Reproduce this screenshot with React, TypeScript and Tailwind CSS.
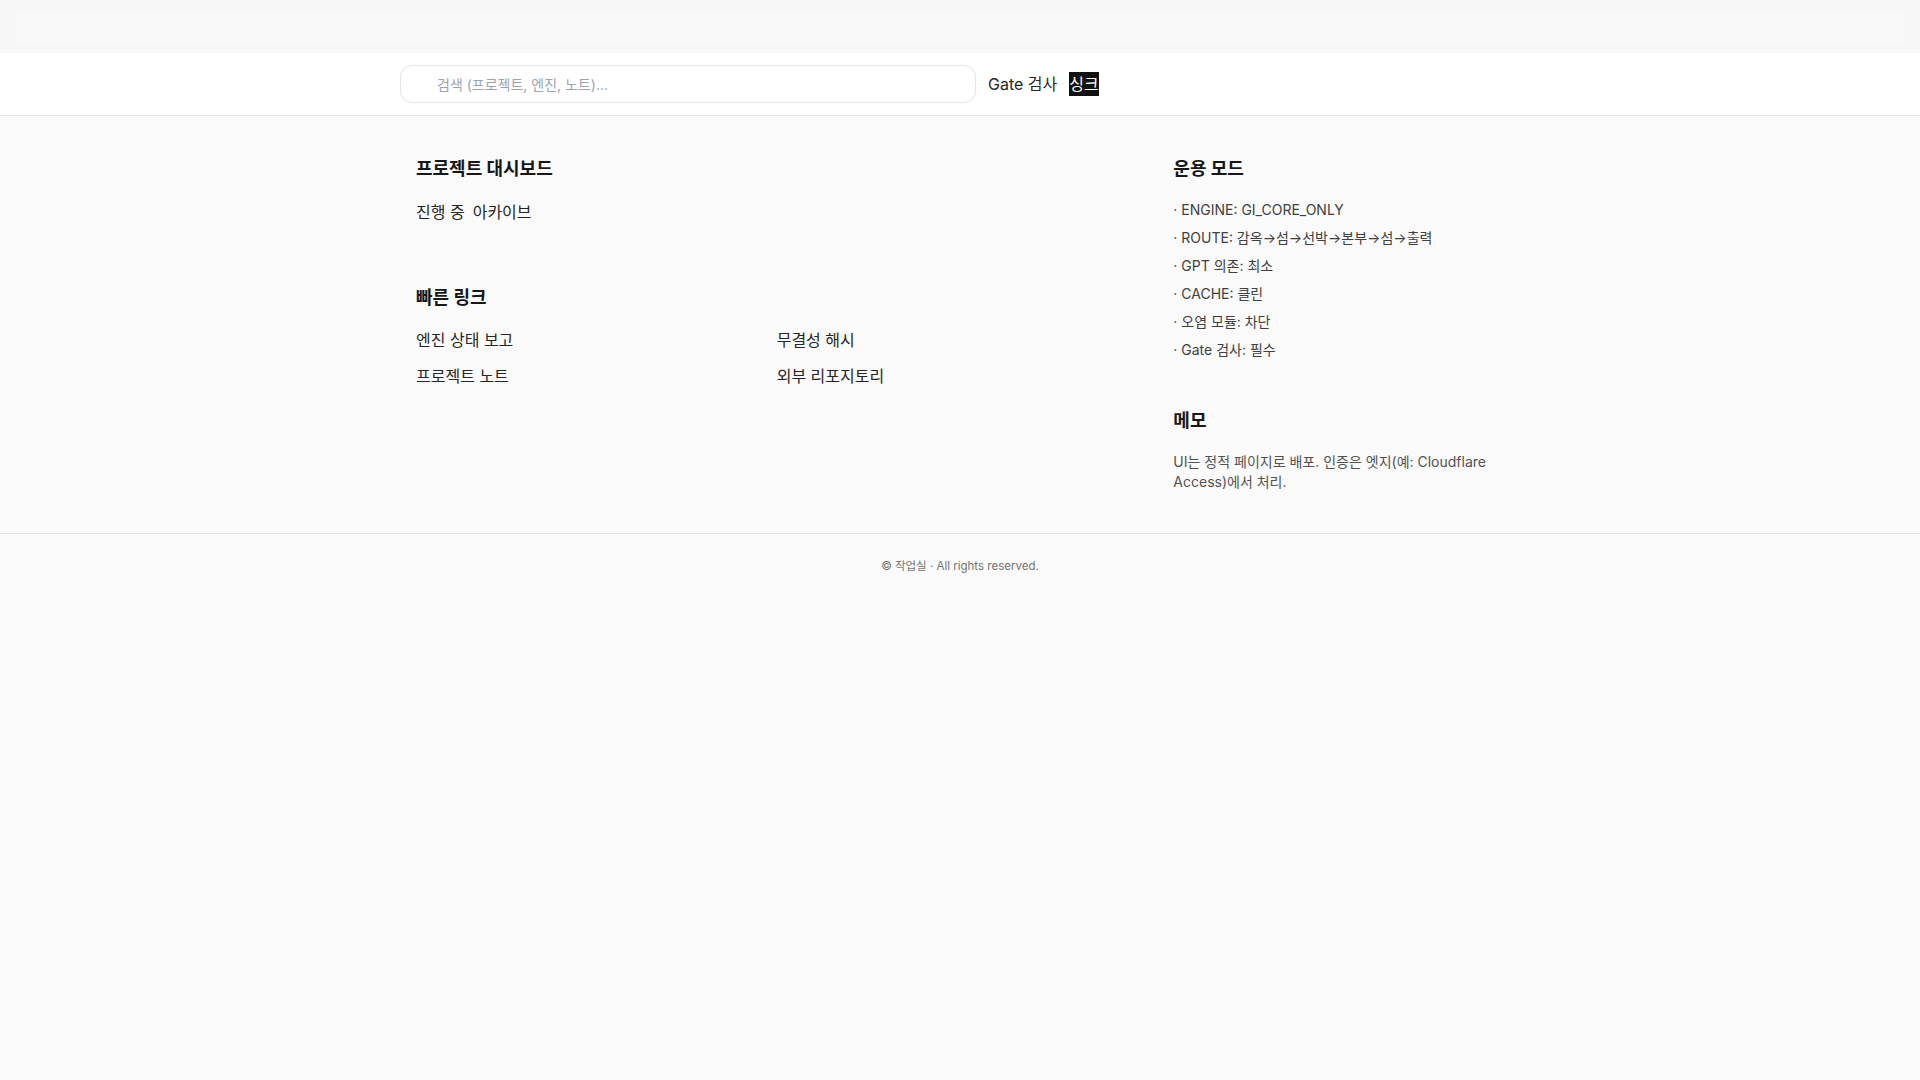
import { useState } from 'react'

const modes = [
  'ENGINE: GI_CORE_ONLY',
  'ROUTE: 감옥→섬→선박→본부→섬→출력',
  'GPT 의존: 최소',
  'CACHE: 클린',
  '오염 모듈: 차단',
  'Gate 검사: 필수',
]

const quickLinks = ['엔진 상태 보고', '무결성 해시', '프로젝트 노트', '외부 리포지토리']

export default function App() {
  const [query, setQuery] = useState('')

  return (
    <div className="min-h-screen bg-[#fafafa] font-['Inter','Noto_Sans_CJK_KR',sans-serif] text-[#262626]">
      {/* 상단 빈 바 */}
      <div className="h-[53px] bg-[#f7f7f7] px-4 py-2.5">
        <div className="h-8 bg-[#f9f9f9]" />
      </div>

      <header className="h-[63px] border-b border-[#e5e5e5] bg-white">
        <div className="mx-auto flex h-full max-w-[1120px] items-center gap-3">
          <input
            value={query}
            onChange={(e) => setQuery(e.target.value)}
            placeholder="검색 (프로젝트, 엔진, 노트)..."
            className="h-[38px] w-full max-w-xl rounded-xl border border-[#e5e5e5] bg-white pl-9 pr-3 text-sm text-[#262626] outline-none placeholder:text-[#9ca3af]"
          />
          <a href="#" className="text-base text-[#262626]">Gate 검사</a>
          <a href="#" className="bg-[#111111] text-base text-white">싱크</a>
        </div>
      </header>

      <main className="mx-auto grid max-w-[1120px] grid-cols-3 gap-x-12 px-4 pt-[39px] pb-[41px]">
        <div className="col-span-2">
          <section>
            <h2 className="mb-[17px] text-lg leading-7 font-bold text-[#171717]">프로젝트 대시보드</h2>
            <div className="flex gap-2 text-base leading-6">
              <a href="#">진행 중</a>
              <a href="#">아카이브</a>
            </div>
          </section>

          <section className="mt-[60px]">
            <h2 className="mb-4 text-lg leading-7 font-bold text-[#171717]">빠른 링크</h2>
            <div className="grid grid-cols-2 gap-x-3 gap-y-3 text-base leading-6">
              {quickLinks.map((l) => (
                <a key={l} href="#">{l}</a>
              ))}
            </div>
          </section>
        </div>

        <aside>
          <section>
            <h2 className="mb-[17px] text-lg leading-7 font-bold text-[#171717]">운용 모드</h2>
            <ul className="space-y-2 text-sm leading-5 text-[#404040]">
              {modes.map((m) => (
                <li key={m}>· {m}</li>
              ))}
            </ul>
          </section>

          <section className="mt-[47px]">
            <h2 className="mb-[17px] text-lg leading-7 font-bold text-[#171717]">메모</h2>
            <p className="text-sm leading-5 text-[#525252]">
              UI는 정적 페이지로 배포. 인증은 엣지(예: Cloudflare Access)에서 처리.
            </p>
          </section>
        </aside>
      </main>

      <footer className="border-t border-[#e5e5e5] py-6">
        <p className="text-center text-[11.5px] leading-4 text-[#737373]">© 작업실 · All rights reserved.</p>
      </footer>
    </div>
  )
}
